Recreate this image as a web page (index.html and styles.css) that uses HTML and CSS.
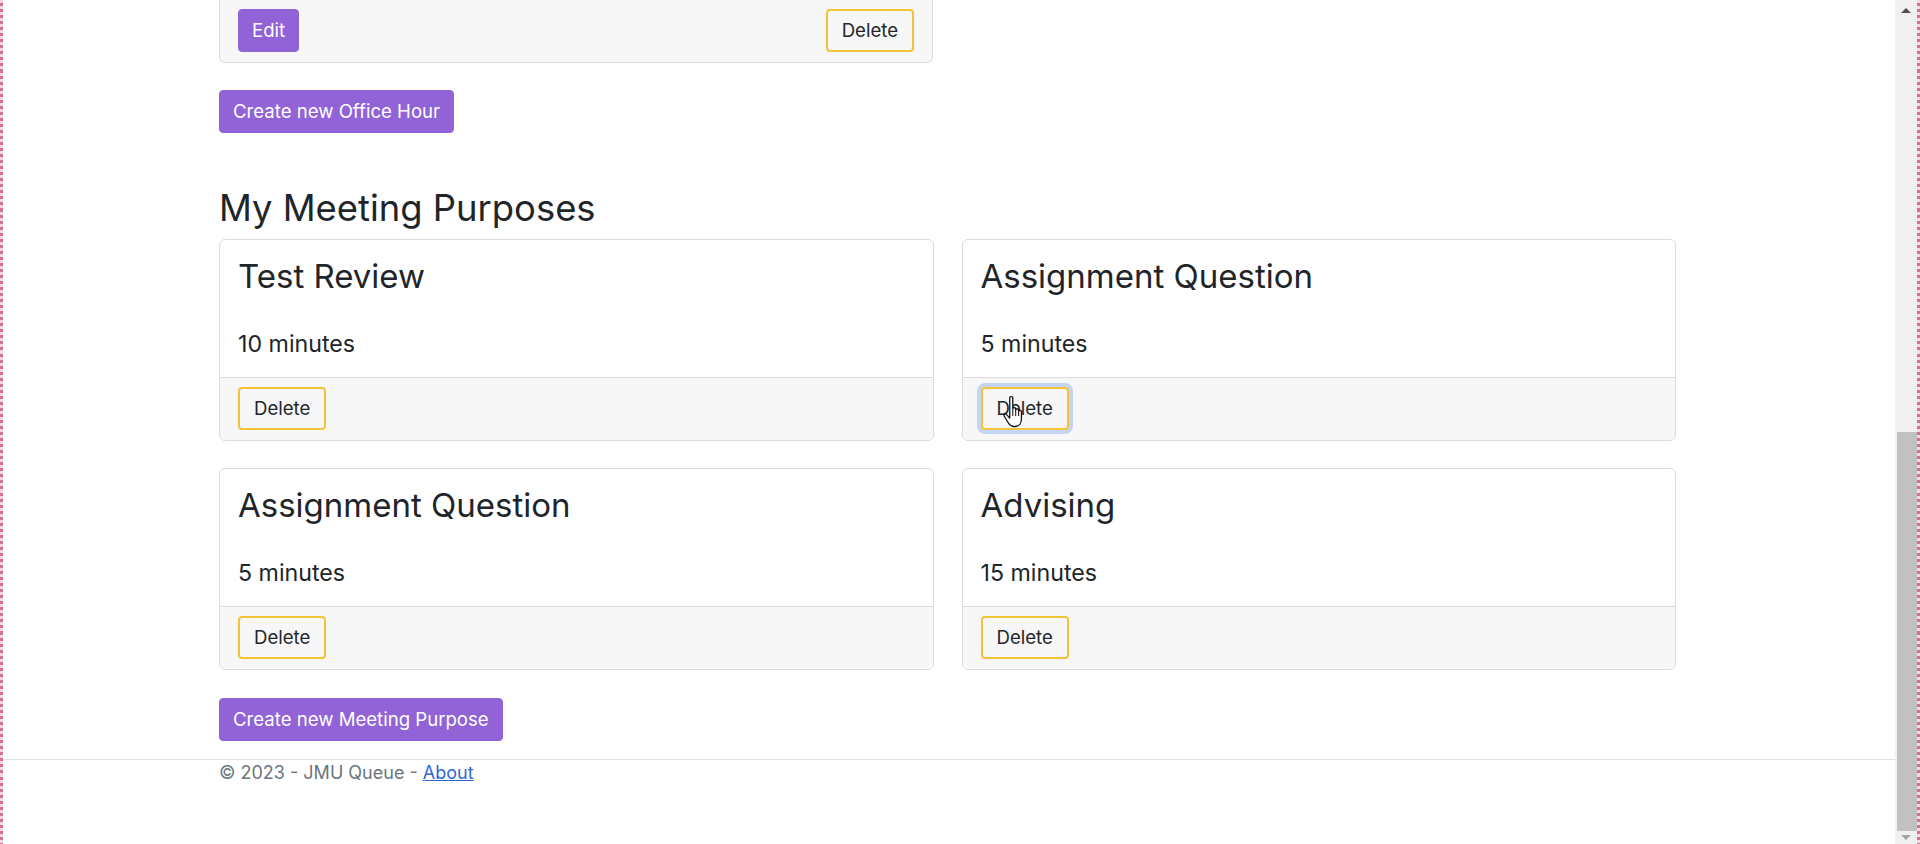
FILE: index.html
```html
<!DOCTYPE html>
<html lang="en">
<head>
<meta charset="utf-8">
<title>JMU Queue</title>
<link rel="stylesheet" href="styles.css">
</head>
<body>
<div class="frame">
  <div class="viewport">
    <main class="container">
      <div class="card card-cut">
        <div class="card-footer footer-split">
          <a class="btn btn-primary" href="#">Edit</a>
          <a class="btn btn-outline" href="#">Delete</a>
        </div>
      </div>
      <div class="create-row create-office">
        <a class="btn btn-primary" href="#">Create new Office Hour</a>
      </div>
      <h2 class="section-title">My Meeting Purposes</h2>
      <div class="purpose-grid">
        <div class="card">
          <div class="card-body">
            <h3 class="card-title">Test Review</h3>
            <p class="card-text">10 minutes</p>
          </div>
          <div class="card-footer">
            <a class="btn btn-outline" href="#">Delete</a>
          </div>
        </div>
        <div class="card">
          <div class="card-body">
            <h3 class="card-title">Assignment Question</h3>
            <p class="card-text">5 minutes</p>
          </div>
          <div class="card-footer">
            <span class="btn-wrap">
              <a class="btn btn-outline is-focused" href="#">Delete</a>
              <svg class="cursor" width="26" height="35" viewBox="0 0 22 30" aria-hidden="true">
                <path d="M6.5 2.2c0-1.1 2.6-1.1 2.6 0v9.3c0-1 2.5-1 2.5 0v1.2c0-1 2.5-1 2.5 0v1.3c0-1 2.4-1 2.4 0v6.5c0 3.5-2 6.5-5.8 6.5H9.8c-2.4 0-3.5-1.4-4.6-3.2l-3.4-5.6c-.8-1.3 1-2.6 2-1.4l2.7 3V2.2z" fill="#fff" stroke="#111" stroke-width="1.1" stroke-linejoin="round"/>
                <path d="M9.1 12v6M11.6 12.8v5.2M14.1 14.1v4" stroke="#111" stroke-width="0.9" fill="none"/>
              </svg>
            </span>
          </div>
        </div>
        <div class="card">
          <div class="card-body">
            <h3 class="card-title">Assignment Question</h3>
            <p class="card-text">5 minutes</p>
          </div>
          <div class="card-footer">
            <a class="btn btn-outline" href="#">Delete</a>
          </div>
        </div>
        <div class="card">
          <div class="card-body">
            <h3 class="card-title">Advising</h3>
            <p class="card-text">15 minutes</p>
          </div>
          <div class="card-footer">
            <a class="btn btn-outline" href="#">Delete</a>
          </div>
        </div>
      </div>
      <div class="create-row create-purpose">
        <a class="btn btn-primary" href="#">Create new Meeting Purpose</a>
      </div>
    </main>
    <footer class="site-footer">
      <div class="container footer-inner">© 2023 - JMU Queue - <a href="#">About</a></div>
    </footer>
  </div>
  <div class="scrollbar">
    <span class="arrow arrow-up"></span>
    <div class="track"><div class="thumb"></div></div>
    <span class="arrow arrow-down"></span>
  </div>
</div>
</body>
</html>
```

FILE: styles.css
```css
* { box-sizing: border-box; }

html, body {
  margin: 0;
  padding: 0;
  background: #fff;
}

body {
  font-family: "Inter", "Liberation Sans", sans-serif;
  font-size: 18px;
  line-height: 1.5;
  color: #212529;
}

.frame {
  display: flex;
  height: 844px;
  overflow: hidden;
  border-left: 3px solid transparent;
  border-right: 3px solid transparent;
  border-image: repeating-linear-gradient(to bottom, #d5718f 0 3px, #f4d9e1 3px 6px) 3;
}

.viewport {
  flex: 1;
  display: flex;
  flex-direction: column;
  min-width: 0;
}

.container {
  width: 1457px;
  margin-left: 216px;
}

/* cards */
.card {
  background: #fff;
  border: 1px solid #dcdcdc;
  border-radius: 6px;
  display: flex;
  flex-direction: column;
  overflow: hidden;
}

.card-cut {
  width: 714px;
  border-top: none;
  border-top-left-radius: 0;
  border-top-right-radius: 0;
}

.card-body {
  padding: 16px 18px 18px;
}

.card-title {
  margin: 0 0 33px;
  font-size: 33px;
  font-weight: 400;
  line-height: 40px;
}

.card-text {
  margin: 0;
  font-size: 23.2px;
  line-height: 30px;
}

.card-footer {
  background: #f7f7f7;
  border-top: 1px solid #dcdcdc;
  padding: 9px 18px 10px;
  display: flex;
}

.card-cut .card-footer {
  border-top: none;
  padding: 9px 18px 10px;
}

.footer-split {
  justify-content: space-between;
}

/* buttons */
.btn {
  display: inline-block;
  padding: 7px 13px;
  font-size: 18.6px;
  line-height: 27px;
  border-radius: 4px;
  border: 1px solid transparent;
  text-decoration: none;
  white-space: nowrap;
}

.btn-primary {
  background: #9163d6;
  border-color: #9163d6;
  color: #fff;
}

.btn-outline {
  background: transparent;
  border: 2px solid #f3c43a;
  color: #212529;
  padding: 6px 14px;
}

.btn-outline.is-focused {
  box-shadow: 0 0 0 4px #c3d5f2;
}

.btn-wrap {
  position: relative;
  display: inline-block;
}

.cursor {
  position: absolute;
  left: 21px;
  top: 8px;
}

.create-row {
  display: flex;
}

.create-office {
  margin: 27px 0 54px;
}

.section-title {
  margin: 0 0 9px;
  font-size: 36.4px;
  font-weight: 400;
  line-height: 43px;
}

.purpose-grid {
  display: grid;
  grid-template-columns: 1fr 1fr;
  column-gap: 28px;
  row-gap: 27px;
}

.create-purpose {
  margin: 28px 0 18px;
}

/* footer */
.site-footer {
  border-top: 1px solid #dee2e6;
  color: #6c757d;
  font-size: 18px;
  line-height: 26px;
}

.site-footer a {
  color: #2f66d9;
}

/* fake scrollbar */
.scrollbar {
  width: 22px;
  background: #f0f0f0;
  display: flex;
  flex-direction: column;
  align-items: center;
}

.arrow {
  width: 0;
  height: 0;
  border-left: 5px solid transparent;
  border-right: 5px solid transparent;
}

.arrow-up {
  margin-top: 8px;
  border-bottom: 5px solid #505050;
}

.arrow-down {
  margin-bottom: 4px;
  border-top: 5px solid #a3a3a3;
}

.track {
  flex: 1;
  align-self: stretch;
  display: flex;
  flex-direction: column;
  justify-content: flex-end;
  padding: 0 0 4px 2px;
}

.thumb {
  height: 399px;
  background: #c1c1c1;
}
```
